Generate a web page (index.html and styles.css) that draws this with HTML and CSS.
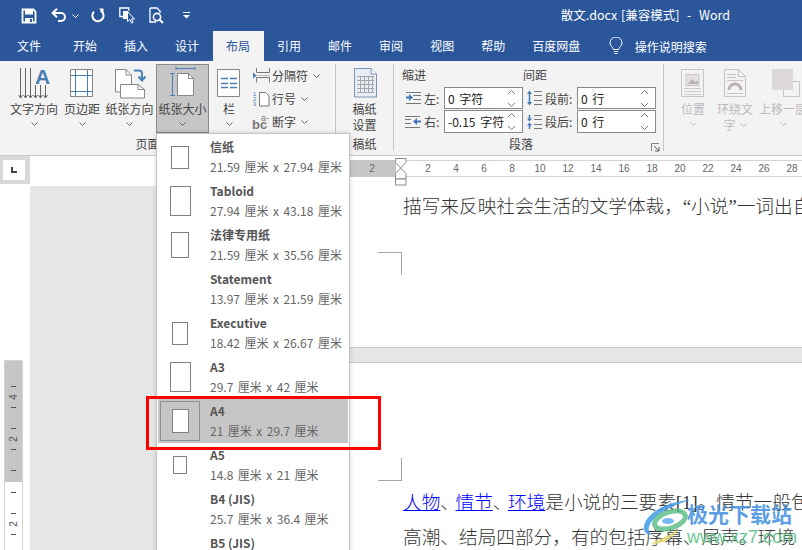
FILE: index.html
```html
<!DOCTYPE html>
<html lang="zh-CN">
<head>
  <meta charset="UTF-8">
  <title>散文.docx - Word</title>
  <link rel="stylesheet" href="styles.css">
</head>
<body>
  <svg class="defs" width="0" height="0">
    <symbol id="chev" viewBox="0 0 7 4"><path d="M.5.5 3.5 3.5 6.5.5" fill="none" stroke="currentColor"/></symbol>
  </svg>

  <div class="app">
    <div class="titlebar">
      <div class="qat">
        <svg class="q-save" width="16" height="16" viewBox="0 0 16 16"><path d="M1.5 1.5h11l2 2v11h-13z" fill="none" stroke="#fff" stroke-width="1.8"/><path d="M4 2h8v4.500H4zM4 10h8v5H4z" fill="#fff"/><path d="M9 11h2v3H9z" fill="#2b579a"/></svg>
        <svg class="q-undo" width="16" height="15" viewBox="0 0 16 15"><path d="M2 5h8a4 4 0 0 1 0 8H7" fill="none" stroke="#fff" stroke-width="2"/><path d="M6 .8 1.6 5 6 9.2" fill="none" stroke="#fff" stroke-width="2"/></svg>
        <svg class="q-chev" width="7" height="4"><use href="#chev"/></svg>
        <svg class="q-redo" width="14" height="15" viewBox="0 0 14 15"><path d="M9.5 2.6A5.6 5.6 0 1 1 3 3.6" fill="none" stroke="#fff" stroke-width="2"/><path d="M8 .5h4.5V5z" fill="#fff"/></svg>
        <svg class="q-touch" width="17" height="17" viewBox="0 0 17 17"><path d="M6 9.5H.8V1h9v3" fill="none" stroke="#fff" stroke-width="1.3"/><path d="M4 4h5v8H4z" fill="#fff"/><path d="M8.5 4.5v10l2.4-2 1.6 3.6 1.6-.7-1.6-3.4h3z" fill="#2b579a" stroke="#fff"/></svg>
        <svg class="q-preview" width="16" height="17" viewBox="0 0 16 17"><path d="M1 1h7l3 3v2M1 1v14h6" fill="none" stroke="#fff" stroke-width="1.3"/><circle cx="8" cy="10" r="3.6" fill="none" stroke="#fff" stroke-width="1.6"/><path d="m10.6 12.6 3.4 3.4" stroke="#fff" stroke-width="2"/></svg>
        <svg class="q-custom" width="7" height="7" viewBox="0 0 7 7"><path d="M0 .5h7" stroke="#fff"/><path d="M0 3h7L3.5 6.5z" fill="#fff"/></svg>
      </div>
      <div class="doc-title">散文.docx [兼容模式] &nbsp;-&nbsp; Word</div>
    </div>

    <div class="tabs">
      <span class="tab tab-file">文件</span>
      <span class="tab">开始</span>
      <span class="tab">插入</span>
      <span class="tab">设计</span>
      <span class="tab active">布局</span>
      <span class="tab">引用</span>
      <span class="tab">邮件</span>
      <span class="tab">审阅</span>
      <span class="tab">视图</span>
      <span class="tab">帮助</span>
      <span class="tab">百度网盘</span>
      <span class="tell-me">
        <svg width="14" height="18" viewBox="0 0 14 18"><path d="M4.5 12.5C4 10 1 9 1 6a6 6 0 0 1 12 0c0 3-3 4-3.5 6.500z" fill="none" stroke="#fff"/><path d="M5 14.500h4M5.500 16.500h3" stroke="#fff"/></svg>
        操作说明搜索
      </span>
    </div>

    <div class="ribbon">
      <section class="group group-page">
        <div class="group-body">
          <div class="big w50">
            <svg class="big-icon" width="36" height="32" viewBox="0 0 36 32">
              <g stroke="#666" fill="none"><path d="M4.500 0v30M9.500 0v30M14.500 0v30M19.500 17v13M24.500 17v13M29.500 17v13"/><path d="m2.500 27 2 3 2-3M7.500 27l2 3 2-3M12.500 27l2 3 2-3M17.500 27l2 3 2-3M22.500 27l2 3 2-3M27.500 27l2 3 2-3"/></g>
              <text class="glyph-a" x="26.500" y="15.500">A</text>
            </svg>
            <span>文字方向</span>
            <svg class="chev" width="7" height="4"><use href="#chev"/></svg>
          </div>
          <div class="big w46">
            <svg class="big-icon" width="36" height="32" viewBox="0 0 36 32">
              <path d="M6.500 1.500h22v27h-22z" fill="#fff" stroke="#888"/>
              <path d="M11.500 2v26M23.500 2v26M7 7.500h21M7 23.500h21" stroke="#4a7fb5" fill="none"/>
            </svg>
            <span>页边距</span>
            <svg class="chev" width="7" height="4"><use href="#chev"/></svg>
          </div>
          <div class="big w49">
            <svg class="big-icon" width="36" height="32" viewBox="0 0 36 32">
              <path d="M3.500 1.500H14l5.500 5.500v17h-16z" fill="#fff" stroke="#888"/>
              <path d="M14 1.500V7h5.500" fill="none" stroke="#888"/>
              <path d="M8.500 16.500H26l6.500 5v8.500h-24z" fill="#fff" stroke="#888"/>
              <path d="M26 16.500v5h6.500" fill="none" stroke="#888"/>
              <path d="M22 2.500h5a3 3 0 0 1 3 3v5" fill="none" stroke="#4a7fb5" stroke-width="2"/>
              <path d="m26.500 8.500 3.500 4 3.500-4" fill="none" stroke="#4a7fb5" stroke-width="2"/>
            </svg>
            <span>纸张方向</span>
            <svg class="chev" width="7" height="4"><use href="#chev"/></svg>
          </div>
          <div class="big big-on">
            <svg class="big-icon" width="36" height="32" viewBox="0 0 36 32">
              <path d="M12.500 5.500h11l5 5v17h-16z" fill="#fff" stroke="#888"/>
              <path d="M23.500 5.500v5h5" fill="none" stroke="#888"/>
              <path d="M11 .5h19M11-1v3M30-1v3M7.500 5v23M5 5.500h5M5 27.500h5" stroke="#4a7fb5" fill="none"/>
            </svg>
            <span>纸张大小</span>
            <svg class="chev" width="7" height="4"><use href="#chev"/></svg>
          </div>
          <div class="big w40">
            <svg class="big-icon" width="36" height="32" viewBox="0 0 36 32">
              <path d="M6.500 1.500h22v27h-22z" fill="#fff" stroke="#888"/>
              <path d="M10 10.500h7M19 10.500h7M10 15.500h7M19 15.500h7M10 19.500h7M19 19.500h7" stroke="#4a7fb5" stroke-width="1.5"/>
            </svg>
            <span>栏</span>
            <svg class="chev" width="7" height="4"><use href="#chev"/></svg>
          </div>
          <div class="small-col">
            <div class="small">
              <svg width="18" height="16" viewBox="0 0 18 16"><path d="M4.500 0v4.500h13V0M4.500 14.500V9.500h13v5" fill="none" stroke="#777"/><path d="M4 7.500h14" stroke="#bbb"/><path d="M1 4.500 4.500 7.500 1 10.500z" fill="#4a7fb5"/></svg>
              <span>分隔符</span><svg class="chev" width="7" height="4"><use href="#chev"/></svg>
            </div>
            <div class="small">
              <svg width="18" height="16" viewBox="0 0 18 16"><text class="glyph-nums" x="1" y="5">1</text><text class="glyph-nums" x="1" y="10">2</text><text class="glyph-nums" x="1" y="15">3</text><path d="M7.500 1.500h6l3.500 3.500v10h-9.500z" fill="#fff" stroke="#777"/></svg>
              <span>行号</span><svg class="chev" width="7" height="4"><use href="#chev"/></svg>
            </div>
            <div class="small">
              <svg width="18" height="16" viewBox="0 0 18 16"><text class="glyph-bc" x="0" y="15">bc</text><text class="glyph-sup" x="9" y="7">a-</text></svg>
              <span>断字</span><svg class="chev" width="7" height="4"><use href="#chev"/></svg>
            </div>
          </div>
        </div>
        <div class="group-label label-page">页面设置</div>
      </section>

      <section class="group group-grid">
        <div class="group-body">
          <div class="big grow">
            <svg class="big-icon" width="36" height="32" viewBox="0 0 36 32">
              <path d="M7.500.5H24l5.500 5.500v23h-22z" fill="#e6edf7" stroke="#7d93b2"/>
              <path d="M24 .5V6h5.500" fill="#fff" stroke="#7d93b2"/>
              <path d="M10 8.500h17M10 12.500h17M10 16.500h17M10 20.500h17M10 24.500h17M13.500 8v17M17.500 8v17M21.500 8v17M25.500 8v17" stroke="#a6a6a6" fill="none"/>
            </svg>
            <span>稿纸</span>
            <span>设置</span>
          </div>
        </div>
        <div class="group-label">稿纸</div>
      </section>

      <section class="group group-para">
        <div class="group-body para-grid">
          <div class="para-head">缩进</div>
          <div class="para-head">间距</div>
          <div class="para-cell">
            <svg class="para-icon" width="16" height="14" viewBox="0 0 16 14"><path d="M1 1.500h15M8 4.500h8M8 8.500h8M1 12.500h15" stroke="#777"/><path d="M1 6.500h5" stroke="#3f78b5" stroke-width="2"/><path d="m4 3 4 3.500L4 10z" fill="#3f78b5"/></svg>
            <span class="para-label">左:</span>
            <div class="spin"><span>0 字符</span><svg width="9" height="19" viewBox="0 0 9 19"><path d="m1 5 3.500-3.500L8 5M1 14l3.500 3.500L8 14" fill="none" stroke="#777"/></svg></div>
          </div>
          <div class="para-cell">
            <svg class="para-icon" width="16" height="16" viewBox="0 0 16 16"><path d="M3.500 3v10" stroke="#3f78b5" stroke-width="1.5"/><path d="m1 4 2.500-3.500L6 4zM1 12l2.500 3.500L6 12z" fill="#3f78b5"/><path d="M8 1.500h8M8 5.500h8M8 10.500h8M8 14.500h8" stroke="#777"/></svg>
            <span class="para-label wide">段前:</span>
            <div class="spin"><span>0 行</span><svg width="9" height="19" viewBox="0 0 9 19"><path d="m1 5 3.500-3.500L8 5M1 14l3.500 3.500L8 14" fill="none" stroke="#777"/></svg></div>
          </div>
          <div class="para-cell">
            <svg class="para-icon" width="16" height="14" viewBox="0 0 16 14"><path d="M0 1.500h15M0 4.500h6M0 8.500h6M0 12.500h15" stroke="#777"/><path d="M11 6.500h5" stroke="#3f78b5" stroke-width="2"/><path d="M12 3 8 6.500 12 10z" fill="#3f78b5"/></svg>
            <span class="para-label">右:</span>
            <div class="spin"><span>-0.15 字符</span><svg width="9" height="19" viewBox="0 0 9 19"><path d="m1 5 3.500-3.500L8 5M1 14l3.500 3.500L8 14" fill="none" stroke="#777"/></svg></div>
          </div>
          <div class="para-cell">
            <svg class="para-icon" width="16" height="16" viewBox="0 0 16 16"><path d="M3.500 1v5M3.500 10v5" stroke="#3f78b5" stroke-width="1.5"/><path d="m1 4.500 2.500 3L6 4.500zM1 11.500l2.500-3 2.500 3z" fill="#3f78b5"/><path d="M8 1.500h8M8 5.500h8M8 10.500h8M8 14.500h8" stroke="#777"/></svg>
            <span class="para-label wide">段后:</span>
            <div class="spin"><span>0 行</span><svg width="9" height="19" viewBox="0 0 9 19"><path d="m1 5 3.500-3.500L8 5M1 14l3.500 3.500L8 14" fill="none" stroke="#777"/></svg></div>
          </div>
        </div>
        <div class="group-label label-para">
          <span>段落</span>
          <svg class="launcher" width="9" height="9" viewBox="0 0 9 9"><path d="M.5 8V.5H8" fill="none" stroke="#888"/><path d="M3 3l4.500 4.500M8 4v4H4" fill="none" stroke="#555"/></svg>
        </div>
      </section>

      <section class="group group-arrange">
        <div class="group-body">
          <div class="big off w32">
            <svg class="big-icon" width="36" height="32" viewBox="0 0 36 32">
              <path d="M6.500 1.500h22v27h-22z" fill="#f3f3f3" stroke="#c9c3c9"/>
              <path d="M11 6.500h13v11H11z" fill="#e4e0e4" stroke="#c9c3c9"/>
              <path d="m13 16 4-5 3 3 2-1.500 2 3.500z" fill="#b8b2b8"/>
              <path d="M9 20.500h17M9 23.500h17M9 26.500h17" stroke="#d0cbd0"/>
            </svg>
            <span>位置</span>
            <svg class="chev" width="7" height="4"><use href="#chev"/></svg>
          </div>
          <div class="big off w40 gap6">
            <svg class="big-icon" width="36" height="32" viewBox="0 0 36 32">
              <path d="M7.500 1.500h14l7 7v20h-21z" fill="#f3f3f3" stroke="#c9c3c9"/>
              <path d="M21.500 1.500v7h7M10 6.500h9M10 9.500h9M10 12.500h16M10 25.500h16" fill="none" stroke="#c9c3c9"/>
              <path d="M12 22a6 6 0 0 1 12 0" fill="none" stroke="#b8b2b8" stroke-width="3"/>
            </svg>
            <span>环绕文</span>
            <span class="off-last">字<svg class="chev" width="7" height="4"><use href="#chev"/></svg></span>
          </div>
          <div class="big off w50 gap3">
            <svg class="big-icon" width="36" height="32" viewBox="0 0 36 32">
              <path d="M18.500 13.500h16v15h-16z" fill="#f3f3f3" stroke="#c9c3c9"/>
              <path d="M7 1h21v21H7z" fill="#dcd8dc"/>
            </svg>
            <span>上移一层</span>
            <svg class="chev" width="7" height="4"><use href="#chev"/></svg>
          </div>
        </div>
      </section>
    </div>

    <div class="ruler-row">
      <div class="corner">
        <div class="corner-box"><svg width="6" height="6"><path d="M1 0v5h5" fill="none" stroke="#444" stroke-width="2"/></svg></div>
      </div>
      <div class="hruler">
        <div class="hruler-off"><span>2</span></div>
        <div class="hruler-on">
          <span>2</span><span>4</span><span>6</span><span>8</span><span>10</span><span>12</span><span>14</span>
          <span>16</span><span>18</span><span>20</span><span>22</span><span>24</span><span>26</span><span>28</span>
        </div>
      </div>
    </div>

    <div class="doc-row">
      <div class="vruler-col">
        <div class="vruler">
          <div class="v-off">
            <div class="v-cell"><span>4</span></div>
            <div class="v-cell"></div>
            <div class="v-cell"><span>2</span></div>
            <div class="v-cell"></div>
            <div class="v-cell v-short"></div>
          </div>
          <div class="v-on">
            <div class="v-cell"></div>
            <div class="v-cell"><span>2</span></div>
            <div class="v-cell"></div>
          </div>
        </div>
      </div>
      <div class="canvas">
        <div class="page page-one">
          <p class="doc-line">描写来反映社会生活的文学体裁，“小说”一词出自</p>
          <div class="crop crop-top"></div>
        </div>
        <div class="page page-two">
          <div class="crop crop-bottom"></div>
          <p class="doc-line first"><a>人物</a><span class="tight">、</span><a>情节</a><span class="tight">、</span><a>环境</a>是小说的三要素[1]。情节一般包</p>
          <p class="doc-line">高潮、结局四部分，有的包括序幕、尾声。环境</p>
        </div>
      </div>
    </div>

    <!-- dropdown sits over the ribbon and the document -->
    <div class="menu">
      <div class="menu-item"><div class="thumb"><i class="paper" style="width:18px;height:23px"></i></div><div class="item-text"><b>信纸</b><span>21.59 厘米 x 27.94 厘米</span></div></div>
      <div class="menu-item"><div class="thumb"><i class="paper" style="width:21px;height:30px"></i></div><div class="item-text"><b>Tabloid</b><span>27.94 厘米 x 43.18 厘米</span></div></div>
      <div class="menu-item"><div class="thumb"><i class="paper" style="width:18px;height:26px"></i></div><div class="item-text"><b>法律专用纸</b><span>21.59 厘米 x 35.56 厘米</span></div></div>
      <div class="menu-item"><div class="thumb"></div><div class="item-text"><b>Statement</b><span>13.97 厘米 x 21.59 厘米</span></div></div>
      <div class="menu-item"><div class="thumb"><i class="paper" style="width:16px;height:23px"></i></div><div class="item-text"><b>Executive</b><span>18.42 厘米 x 26.67 厘米</span></div></div>
      <div class="menu-item"><div class="thumb"><i class="paper" style="width:21px;height:30px"></i></div><div class="item-text"><b>A3</b><span>29.7 厘米 x 42 厘米</span></div></div>
      <div class="menu-item selected"><div class="thumb"><i class="paper" style="width:17px;height:24px"></i></div><div class="item-text"><b>A4</b><span>21 厘米 x 29.7 厘米</span></div></div>
      <div class="menu-item"><div class="thumb"><i class="paper" style="width:14px;height:18px"></i></div><div class="item-text"><b>A5</b><span>14.8 厘米 x 21 厘米</span></div></div>
      <div class="menu-item"><div class="thumb"></div><div class="item-text"><b>B4 (JIS)</b><span>25.7 厘米 x 36.4 厘米</span></div></div>
      <div class="menu-item"><div class="thumb"></div><div class="item-text"><b>B5 (JIS)</b><span>18.2 厘米 x 25.7 厘米</span></div></div>
    </div>

    <svg class="indent-mark" width="12" height="28" viewBox="0 0 12 28">
      <path d="M.5.5h10.500v4L5.700 10 .5 4.500zM5.700 10l5.300 5.500v5.500H.5v-5.500z" fill="#fff" stroke="#8a8a8a"/>
      <path d="M.5 21h10.500v6H.5z" fill="#fff" stroke="#8a8a8a"/>
    </svg>

    <div class="callout"></div>

    <div class="watermark">
      <svg class="wm-logo" width="50" height="46" viewBox="0 0 50 46">
        <path d="M47 1C28 2 4 12 1 27c-1 6 3 9 8 9-3-2-4-5-3-8C9 16 30 6 47 1z" fill="#3d9be9" opacity=".85"/>
        <ellipse cx="27" cy="21" rx="16" ry="8" fill="none" stroke="#5fc08a" stroke-width="5" transform="rotate(-18 27 21)" opacity=".85"/>
        <ellipse cx="25" cy="22" rx="6" ry="3" fill="#3d9be9" opacity=".7"/>
        <path d="M8 45c8-6 20-8 28-16-6 12-16 16-28 16z" fill="#e4d774" opacity=".85"/>
      </svg>
      <div class="wm-text">
        <div class="wm-name">极光下载站</div>
        <div class="wm-url">www.xz7.com</div>
      </div>
    </div>
  </div>
</body>
</html>
```

FILE: styles.css
```css
* { box-sizing: border-box; }
html, body { margin: 0; height: 100%; overflow: hidden; background: #fff; }
body { font-family: "Noto Sans CJK SC", "Noto Sans", sans-serif; font-size: 12px; color: #444; }
.defs { display: block; }
.app { position: relative; width: 802px; height: 550px; overflow: hidden; }
svg { display: block; flex: none; }

/* title bar */
.titlebar { height: 31px; background: #2b579a; color: #fff; display: flex; align-items: center; }
.qat { display: flex; align-items: center; padding-left: 21px; color: #fff; }
.q-undo { margin-left: 14px; }
.q-chev { margin-left: 5px; }
.q-redo { margin-left: 12px; }
.q-touch { margin-left: 14px; }
.q-preview { margin-left: 13px; }
.q-custom { margin-left: 18px; }
.doc-title { margin-left: auto; margin-right: 72px; padding-bottom: 2px; font-size: 12.5px; word-spacing: 1px; white-space: nowrap; }

/* tabs */
.tabs { height: 30px; background: #2b579a; color: #fff; display: flex; align-items: center; white-space: nowrap; }
.tab { height: 30px; line-height: 30px; padding: 0 13.5px; }
.tab-file { margin-left: 3.5px; margin-right: 5px; }
.tab.active { background: #f3f3f3; color: #2b579a; }
.tell-me { display: flex; align-items: center; gap: 12px; margin-left: 15px; }

/* ribbon */
.ribbon { height: 95px; padding-top: 3px; background: #f3f3f3; border-bottom: 1px solid #c9c9c9; display: flex; overflow: hidden; }
.group { display: flex; flex-direction: column; height: 87px; border-right: 1px solid #c6c6c6; flex: none; }
.group-body { height: 73px; display: flex; }
.group-label { height: 14px; line-height: 14px; text-align: center; white-space: nowrap; }
.group-page { width: 336px; }
.group-page .group-body { padding-left: 9px; }
.label-page { padding-right: 16px; }
.group-grid { width: 58px; }
.group-para { width: 270px; }
.group-arrange { border-right: 0; flex: 1; }
.group-arrange .group-body { padding-left: 13px; }

.big { display: flex; flex-direction: column; align-items: center; height: 69px; line-height: 16px; white-space: nowrap; flex: none; }
.big-icon { margin-top: 4px; margin-bottom: 1px; overflow: visible; }
.big .chev { margin-top: 5px; }
.w32 { width: 32px; }
.w40 { width: 40px; }
.w46 { width: 46px; }
.w49 { width: 49px; }
.w50 { width: 50px; }
.grow { flex: 1; }
.gap6 { margin-left: 6px; }
.gap3 { margin-left: 3px; }
.big-on { width: 53px; margin-left: 2px; background: #c6c6c6; border: 1px solid #8a8a8a; }
.big-on .big-icon { margin-top: 3px; }
.chev { color: #666; }
.off { color: #bdb8bd; }
.off .chev { color: #bdb8bd; }
.off-last { display: flex; align-items: center; gap: 4px; }
.off-last .chev { margin: 0; }

.glyph-a { font-family: "Liberation Sans", sans-serif; font-weight: bold; font-size: 21px; fill: #4a7fb5; text-anchor: middle; }
.glyph-nums { font-family: "Liberation Sans", sans-serif; font-size: 6px; fill: #3f78b5; }
.glyph-bc { font-family: "Liberation Sans", sans-serif; font-weight: bold; font-size: 13px; fill: #777; }
.glyph-sup { font-family: "Liberation Sans", sans-serif; font-size: 9px; fill: #777; }

.small-col { margin-left: 3px; display: flex; flex-direction: column; }
.small { height: 23px; display: flex; align-items: center; white-space: nowrap; }
.small > span { margin-left: 2px; }
.small .chev { margin-left: 5px; }

.para-grid { display: grid; grid-template-columns: 121px 133px; grid-template-rows: 22px 22px 23px; row-gap: 1px; padding-left: 8px; }
.para-head { line-height: 22px; }
.para-cell { display: flex; align-items: center; padding-left: 3px; }
.para-icon { margin-right: 3px; }
.para-label { width: 20px; color: #444; }
.para-label.wide { width: 32px; }
.spin { width: 79px; height: 100%; background: #fff; border: 1px solid #8a8a8a; display: flex; align-items: center; justify-content: space-between; padding: 0 6px 0 3px; color: #222; white-space: nowrap; word-spacing: 2px; }
.label-para { display: flex; align-items: center; text-align: left; }
.label-para > span { margin-left: 115px; }
.launcher { margin-left: auto; margin-right: 3px; margin-top: 6px; }

/* horizontal ruler */
.ruler-row { height: 30px; display: flex; background: #fff; }
.corner { width: 30px; height: 28px; padding: 4px 5px 4px 3px; background: #d9d9d9; flex: none; }
.corner-box { height: 100%; background: #fff; display: flex; align-items: center; justify-content: center; }
.hruler { margin: 4px 0 0 320px; height: 17px; display: flex; font-family: "Liberation Sans", sans-serif; font-size: 10px; color: #666; line-height: 17px; text-align: center; flex: 1; min-width: 0; }
.hruler-off { width: 46px; background: #c6c6c6; flex: none; }
.hruler-off span { display: block; width: 44px; }
.hruler-on { flex: 1; display: flex; padding-left: 18px; border-top: 1px solid #d4d4d4; border-bottom: 1px solid #d4d4d4; line-height: 15px; }
.hruler-on span { width: 28px; flex: none; }

/* document area */
.doc-row { height: 364px; display: flex; }
.vruler-col { width: 30px; background: #fff; flex: none; padding: 174px 0 0 4px; }
.vruler { width: 19px; border: 1px solid #d4d4d4; border-bottom: 0; font-family: "Liberation Sans", sans-serif; font-size: 10px; color: #555; }
.v-off { background: #c6c6c6; height: 121px; padding-top: 25px; overflow: hidden; }
.v-on { background: #fff; padding-top: 10px; }
.v-cell { height: 21px; display: flex; align-items: center; justify-content: center; background: linear-gradient(#555, #555) center top / 5px 1px no-repeat; }
.v-cell span { transform: rotate(-90deg); line-height: 1; }
.v-short { height: 11px; }

.canvas { flex: 1; min-width: 0; background: #e6e6e6; overflow: hidden; }
.page { margin-left: 170px; padding-left: 203px; background: #fff; overflow: hidden; }
.page-one { height: 162px; padding-top: 3px; border-bottom: 1px solid #c6c6c6; }
.page-two { margin-top: 14px; height: 190px; padding-top: 95px; border-top: 1px solid #c6c6c6; }
.doc-line { margin: 0; height: 35px; line-height: 35px; font-family: "Liberation Serif", "Noto Sans CJK SC", serif; font-size: 18.67px; font-weight: 300; color: #333; white-space: nowrap; }
.doc-line.first { margin-top: 4px; }
.doc-line a { color: #00f; text-decoration: underline; }
.tight { margin-right: -3.5px; }
.crop { width: 24px; height: 23px; margin-left: -25px; border-right: 1px solid #a6a6a6; }
.crop-top { margin-top: 28px; border-top: 1px solid #a6a6a6; }
.crop-bottom { border-bottom: 1px solid #a6a6a6; }

/* page size dropdown */
.menu { position: absolute; left: 156px; top: 133px; width: 194px; height: 430px; padding: 1px; background: #fff; border: 1px solid #c6c6c6; box-shadow: 0 0 4px rgba(0, 0, 0, .18); }
.menu-item { height: 44px; display: flex; align-items: center; padding-left: 2px; }
.menu-item.selected { background: #c6c6c6; }
.thumb { width: 40px; height: 40px; display: flex; align-items: center; justify-content: center; border: 1px solid transparent; flex: none; }
.selected .thumb { border-color: #8f8f8f; }
.paper { display: block; background: #fff; border: 1px solid #808080; }
.item-text { margin-left: 10px; line-height: 20px; white-space: nowrap; color: #666; word-spacing: 1.8px; }
.item-text b { display: block; color: #555; font-weight: bold; word-spacing: 0; }
.item-text span { display: block; }

.indent-mark { position: absolute; left: 395px; top: 158px; }
.callout { position: absolute; left: 146px; top: 396px; width: 235px; height: 54px; border: 3px solid #f00; }

/* site watermark */
.watermark { position: absolute; left: 643px; top: 499px; display: flex; }
.wm-text { margin-left: -6px; }
.wm-name { font-size: 21px; font-weight: bold; line-height: 28px; color: #3f8fe0; opacity: .85; white-space: nowrap; }
.wm-url { font-family: "Liberation Sans", sans-serif; font-size: 18px; line-height: 20px; color: #5cc48a; opacity: .9; white-space: nowrap; }
```
